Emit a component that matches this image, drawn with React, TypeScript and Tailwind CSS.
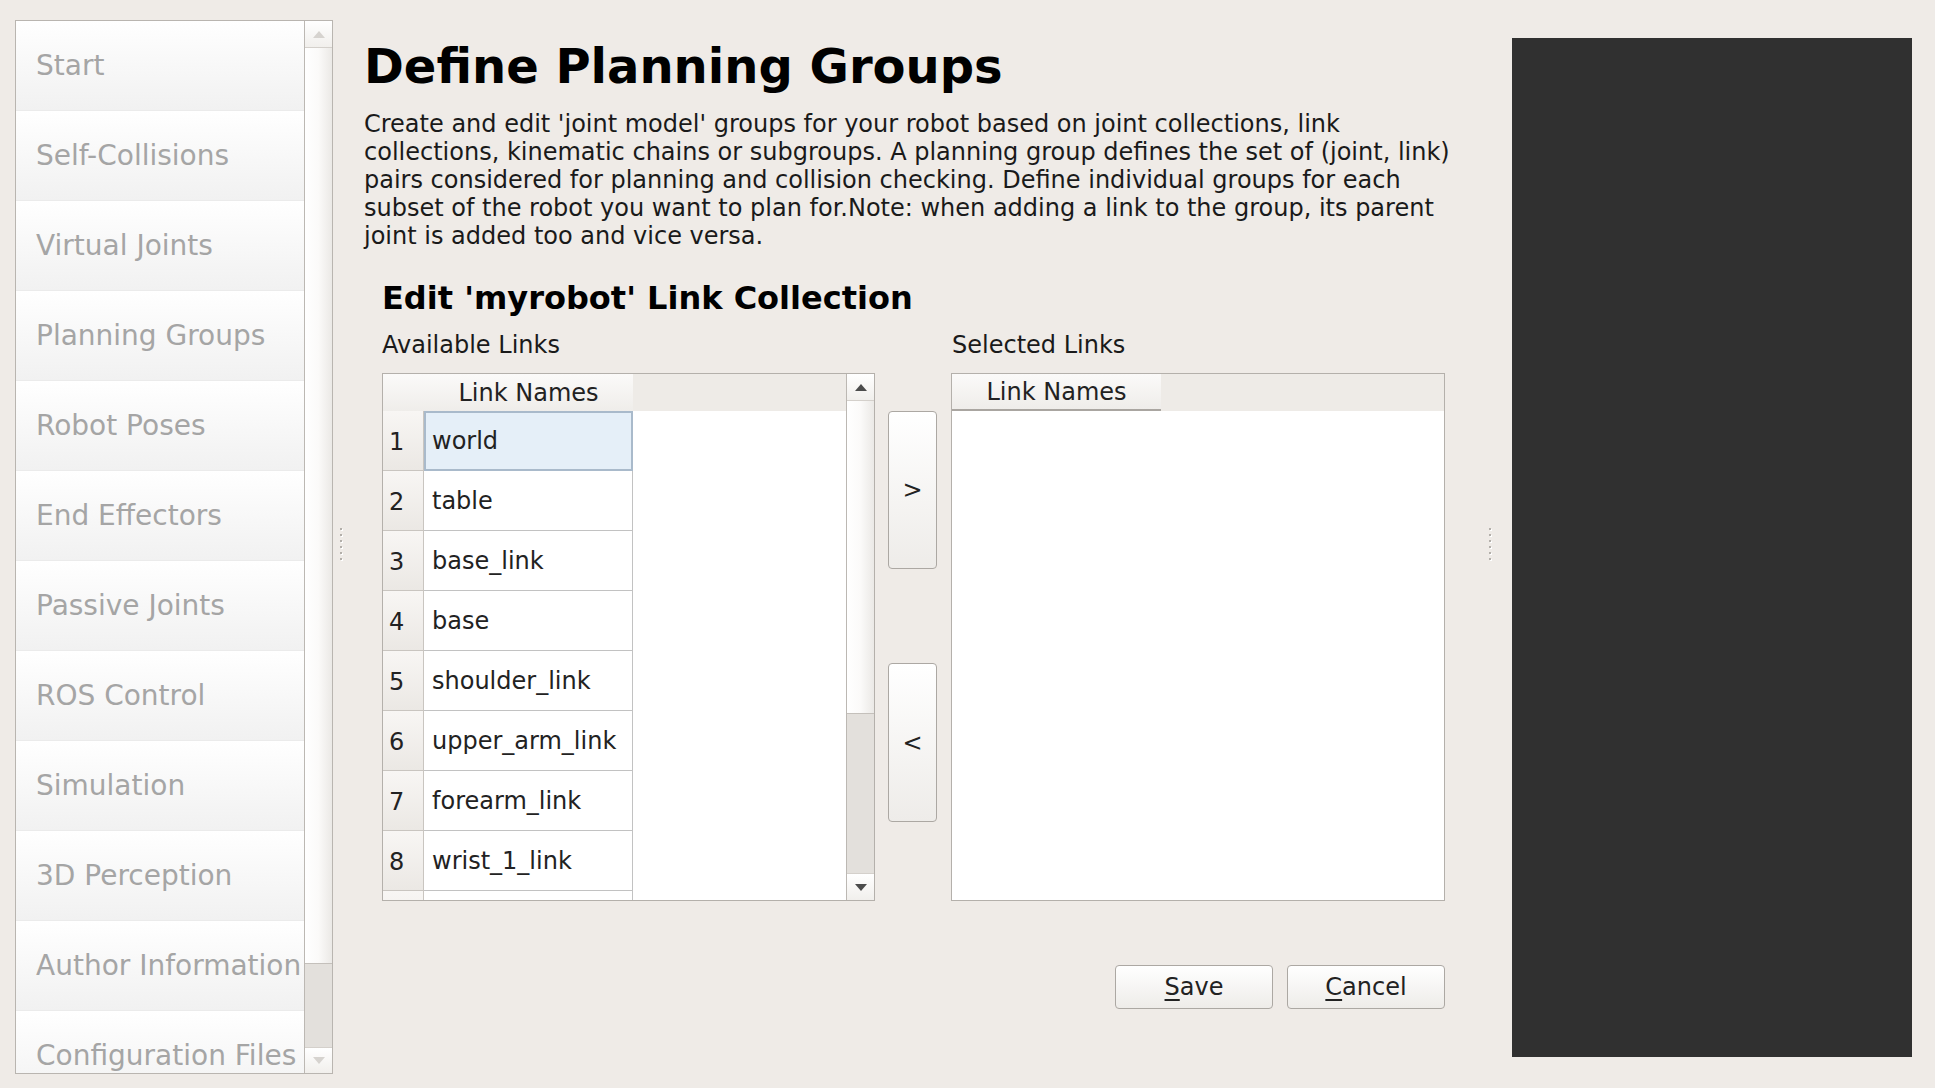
import React from 'react';

const steps = [
  'Start',
  'Self-Collisions',
  'Virtual Joints',
  'Planning Groups',
  'Robot Poses',
  'End Effectors',
  'Passive Joints',
  'ROS Control',
  'Simulation',
  '3D Perception',
  'Author Information',
  'Configuration Files',
];

// the ninth row only peeks in under the viewport edge, its label is not visible
const links = [
  'world',
  'table',
  'base_link',
  'base',
  'shoulder_link',
  'upper_arm_link',
  'forearm_link',
  'wrist_1_link',
  '',
];

const Arrow = ({ up, color }: { up?: boolean; color: string }) => (
  <svg width="12" height="7" viewBox="0 0 12 7">
    <polygon points={up ? '0,7 6,0 12,7' : '0,0 12,0 6,7'} fill={color} />
  </svg>
);

interface ScrollBarProps {
  track: number;
  handle: number;
  arrowColor: string;
  last: number;
}

const ScrollBar = ({ track, handle, arrowColor, last }: ScrollBarProps) => (
  <div className="flex w-[28px] flex-col border-l border-[#bcb8b3]">
    <div className="flex h-[27px] items-center justify-center border-b border-[#d4d0cb] bg-gradient-to-b from-white to-[#f1efec]">
      <Arrow up color={arrowColor} />
    </div>
    <div className="bg-gradient-to-r from-white via-[#fbfaf9] to-[#ebe9e6]" style={{ height: track }} />
    <div className="border-t border-[#c4c0bb] bg-[#e3e0dc]" style={{ height: handle }} />
    <div className="flex items-center justify-center border-t border-[#d4d0cb] bg-gradient-to-b from-white to-[#f1efec]" style={{ height: last }}>
      <Arrow color={arrowColor} />
    </div>
  </div>
);

const Dots = () => (
  <div className="flex flex-col gap-[4px]">
    {[0, 1, 2, 3, 4, 5].map((i) => (
      <div key={i} className="h-[2px] w-[2px] bg-[#b3afaa] shadow-[1px_1px_0_#ffffff]" />
    ))}
  </div>
);

const Sidebar = () => (
  <div className="flex h-[1054px] w-[318px] border border-[#b9b5b0] bg-white">
    <div className="w-[288px] overflow-hidden">
      {steps.map((s) => (
        <div
          key={s}
          className="flex h-[90px] shrink-0 items-center border-b border-[#ebebeb] bg-gradient-to-b from-white to-[#f1f1f1] pl-[20px] text-[28px] whitespace-nowrap text-[#a5a5a5]"
        >
          {s}
        </div>
      ))}
    </div>
    <ScrollBar track={915} handle={84} arrowColor="#d6d3cf" last={26} />
  </div>
);

const LinkTable = () => (
  <div className="flex h-[528px] w-[493px] border border-[#b4b0ab] bg-white">
    <div className="flex-1 overflow-hidden">
      <div className="flex h-[37px] bg-[#eeebe7]">
        <div className="w-[41px] bg-gradient-to-b from-[#fbfaf9] to-[#efedea]" />
        <div className="flex w-[209px] items-center justify-center bg-gradient-to-b from-[#fbfaf9] to-[#efedea] text-[24px] text-[#222]">
          Link Names
        </div>
      </div>
      {links.map((l, i) => (
        <div key={i} className="flex h-[60px]">
          <div className="flex w-[41px] items-center border-r border-b border-[#c9c5c0] bg-gradient-to-b from-[#f8f6f4] to-[#ebe8e4] pt-[2px] pl-[6px] text-[24px] text-[#222]">
            {l ? i + 1 : ''}
          </div>
          <div
            className={
              i === 0
                ? 'flex w-[209px] items-center border-2 border-[#a9bacb] bg-[#e5eff8] pl-[6px] text-[24px] text-[#222]'
                : 'flex w-[209px] items-center border-r border-b border-[#c2c2c2] pl-[8px] text-[24px] text-[#222]'
            }
          >
            {l}
          </div>
        </div>
      ))}
    </div>
    <ScrollBar track={312} handle={160} arrowColor="#4c4c4c" last={27} />
  </div>
);

const SelectedTable = () => (
  <div className="h-[528px] w-[494px] border border-[#b4b0ab] bg-white">
    <div className="flex h-[37px] bg-[#eeebe7]">
      <div className="flex w-[209px] items-center justify-center border-b-2 border-[#aaa6a1] bg-gradient-to-b from-[#fbfaf9] to-[#efedea] text-[24px] text-[#222]">
        Link Names
      </div>
    </div>
  </div>
);

const PushButton = ({ children, className }: { children: React.ReactNode; className: string }) => (
  <button
    className={
      'flex items-center justify-center rounded-[4px] border border-[#aca8a3] bg-gradient-to-b from-white to-[#eeece9] text-[24px] text-[#222] ' +
      className
    }
  >
    {children}
  </button>
);

export default function App() {
  return (
    <div className="flex h-[1088px] w-[1935px] overflow-hidden bg-[#efebe7] font-['DejaVu_Sans',sans-serif] text-[#1a1a1a]">
      <div className="pt-[20px] pl-[15px]">
        <Sidebar />
      </div>
      <div className="flex w-[31px] items-center pl-[7px]">
        <Dots />
      </div>

      <main className="w-[1099px] pt-[38px]">
        <h1 className="text-[48px] leading-[56px] font-bold text-black">Define Planning Groups</h1>
        <p className="mt-[16px] text-[24px] leading-[28px]">
          Create and edit 'joint model' groups for your robot based on joint collections, link
          <br />
          collections, kinematic chains or subgroups. A planning group defines the set of (joint, link)
          <br />
          pairs considered for planning and collision checking. Define individual groups for each
          <br />
          subset of the robot you want to plan for.Note: when adding a link to the group, its parent
          <br />
          joint is added too and vice versa.
        </p>

        <section className="mt-[30px] px-[18px]">
          <h2 className="text-[32px] leading-[36px] font-bold text-black">Edit 'myrobot' Link Collection</h2>
          <div className="mt-[15px] flex text-[24px] leading-[28px]">
            <div className="w-[569px]">Available Links</div>
            <div className="pl-[1px]">Selected Links</div>
          </div>
          <div className="mt-[14px] flex">
            <LinkTable />
            <div className="ml-[13px] flex w-[49px] flex-col gap-[94px] pt-[38px]">
              <PushButton className="h-[158px] w-[49px]">&gt;</PushButton>
              <PushButton className="h-[159px] w-[49px]">&lt;</PushButton>
            </div>
            <div className="ml-[14px]">
              <SelectedTable />
            </div>
          </div>
          <div className="mt-[64px] flex justify-end gap-[14px]">
            <PushButton className="h-[44px] w-[158px]">
              <span className="underline underline-offset-[4px]">S</span>ave
            </PushButton>
            <PushButton className="h-[44px] w-[158px]">
              <span className="underline underline-offset-[4px]">C</span>ancel
            </PushButton>
          </div>
        </section>
      </main>

      <div className="flex w-[49px] items-center pl-[26px]">
        <Dots />
      </div>
      <div className="mt-[38px] h-[1019px] w-[400px] bg-[#303030]" />
    </div>
  );
}
